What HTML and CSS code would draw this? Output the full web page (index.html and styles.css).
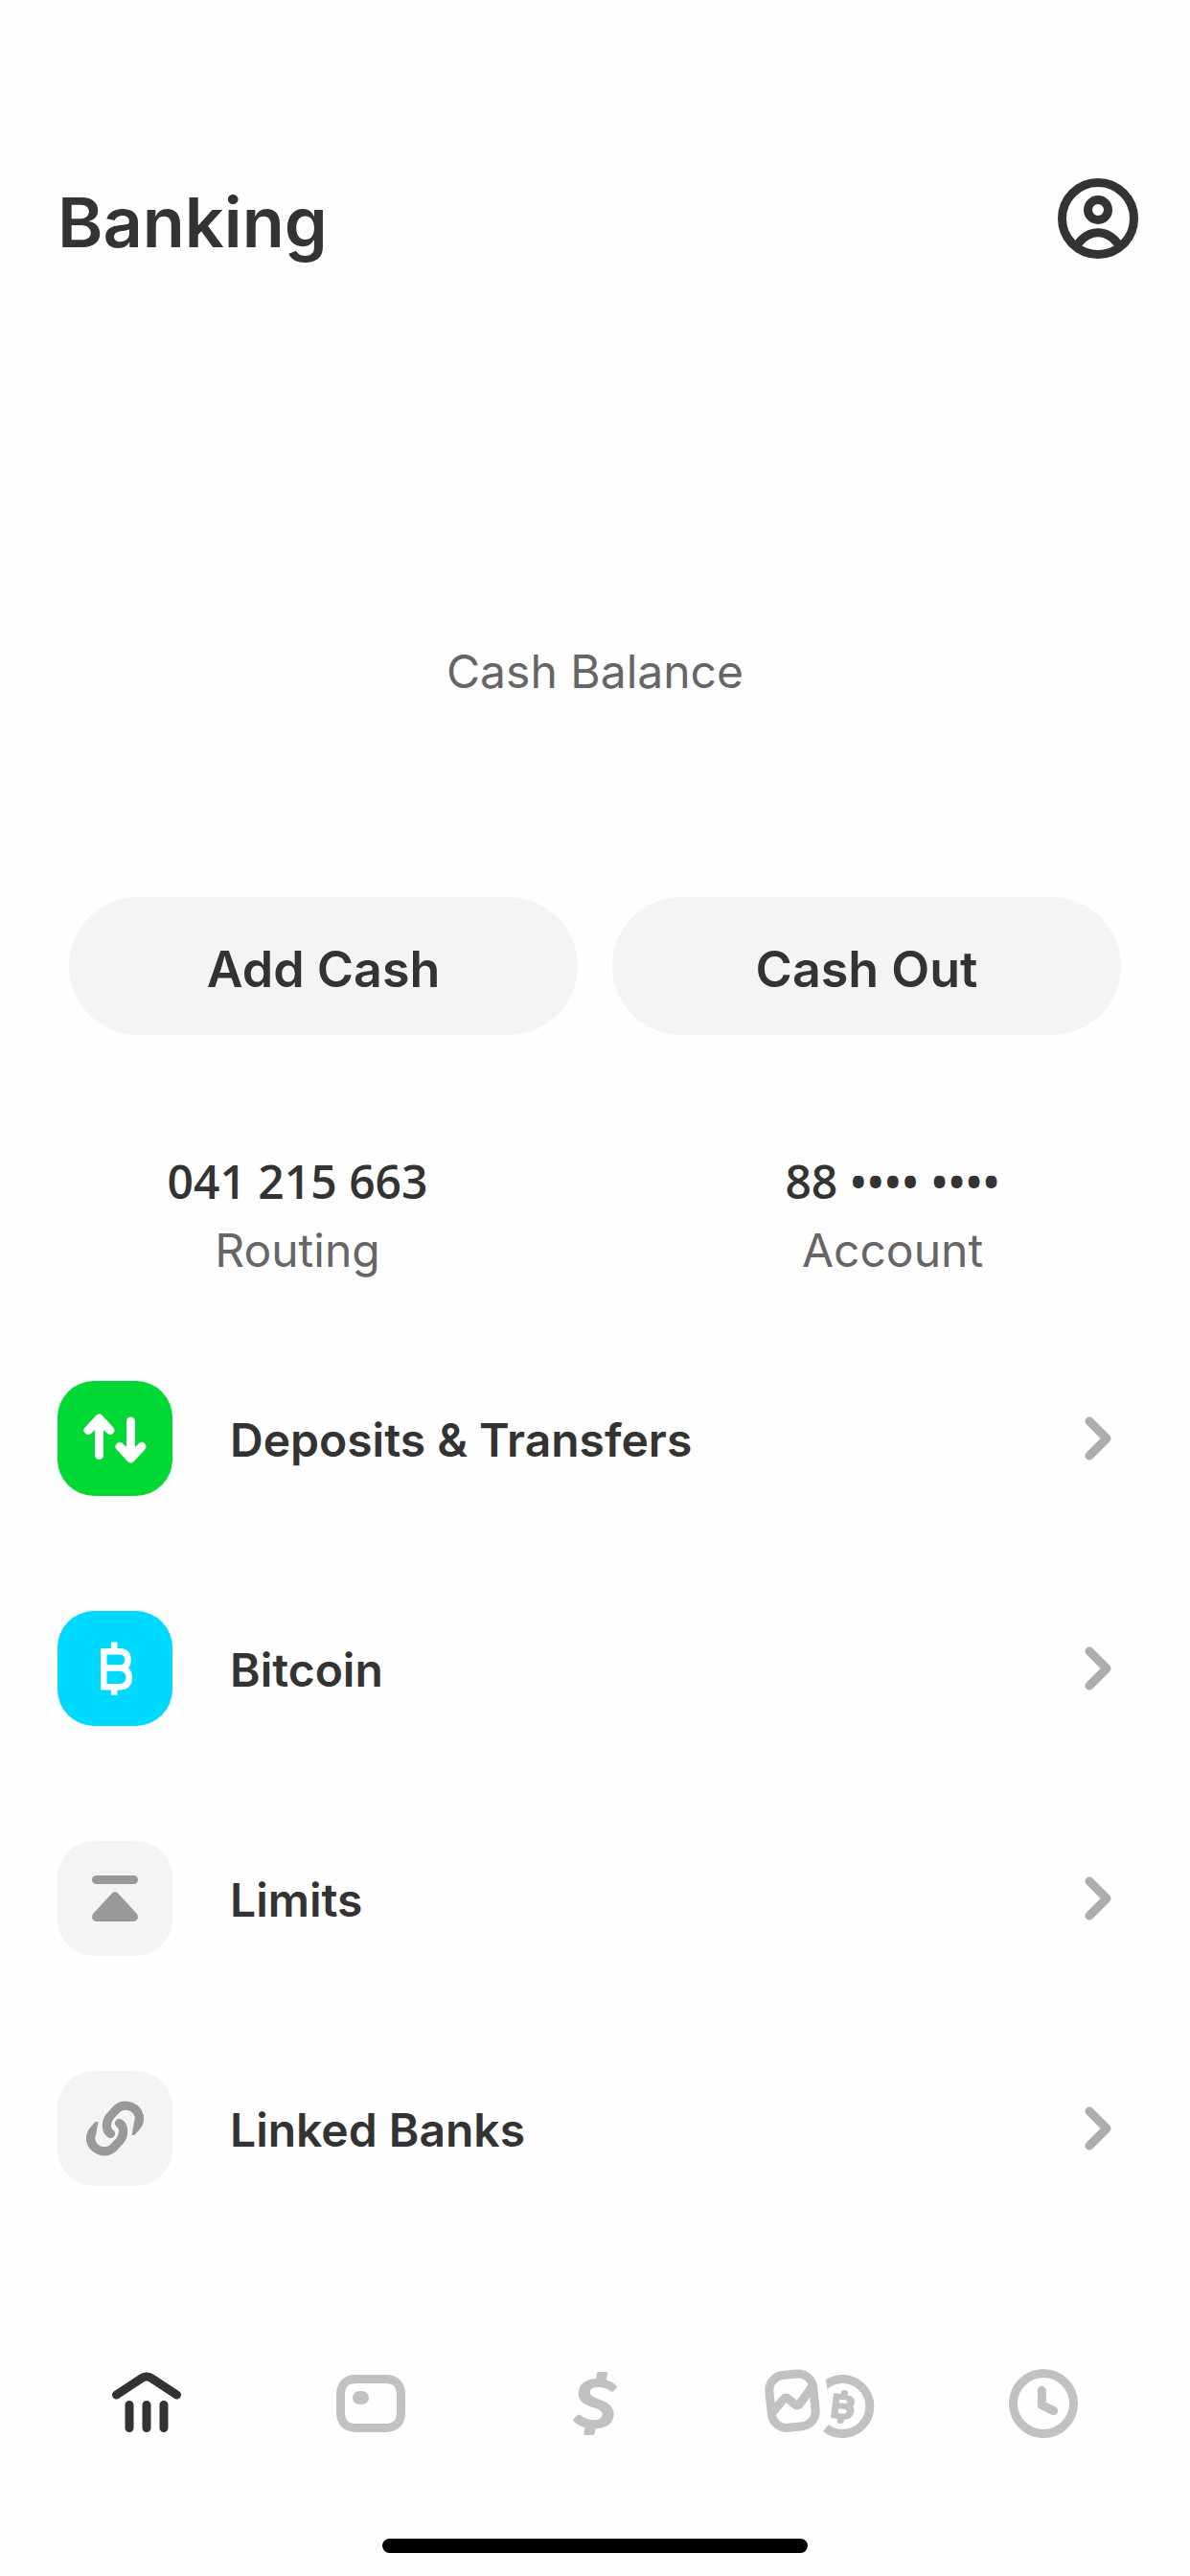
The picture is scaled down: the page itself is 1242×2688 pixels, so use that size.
FILE: index.html
```html
<!DOCTYPE html>
<html lang="en">
<head>
<meta charset="utf-8">
<meta name="viewport" content="width=device-width, initial-scale=1">
<title>Banking</title>
<link rel="stylesheet" href="styles.css">
</head>
<body>
<div class="app">
  <header class="header">
    <h1 class="title">Banking</h1>
    <button class="profile" type="button" aria-label="Profile">
      <svg width="84" height="84" viewBox="72 78 252 252" fill="none" stroke="currentColor" stroke-width="27">
        <circle cx="198" cy="204" r="112.500"/>
        <circle cx="198" cy="177" r="31.500"/>
        <path d="M133 287Q160 248.500 198 248.500Q236 248.500 263 287"/>
      </svg>
    </button>
  </header>

  <main class="main">
    <p class="balance">Cash Balance</p>

    <div class="actions">
      <button class="action" type="button">Add Cash</button>
      <button class="action" type="button">Cash Out</button>
    </div>

    <dl class="numbers">
      <div class="number">
        <dt class="number-label">Routing</dt>
        <dd class="number-value">041 215 663</dd>
      </div>
      <div class="number">
        <dt class="number-label">Account</dt>
        <dd class="number-value">88 •••• ••••</dd>
      </div>
    </dl>

    <ul class="menu">
      <li>
        <a class="row" href="#deposits">
          <svg class="tile tile-green" viewBox="0 0 120 120" fill="none" stroke="currentColor" stroke-width="9" stroke-linecap="round" stroke-linejoin="round">
            <path d="M43.500 40V77.500M32 51.500L43.500 39L55 51.500L43.500 41ZM76.500 42V80M65 68.500L76.500 81L88 68.500L76.500 79Z"/>
          </svg>
          <span class="row-label">Deposits &amp; Transfers</span>
          <svg class="chevron" viewBox="0 0 28 46"><path d="M5 5L23 23L5 41"/></svg>
        </a>
      </li>
      <li>
        <a class="row" href="#bitcoin">
          <svg class="tile tile-cyan" viewBox="0 0 120 120" fill="none" stroke="currentColor" stroke-width="6.500">
            <path d="M48.300 42.300H64.500Q73.500 42.300 73.500 51Q73.500 59.500 64.500 59.500H48.300M64.500 59.500Q74.700 60 74.700 69.500Q74.700 79.200 64.500 79.200H48.300M48.300 39V82.500M59.200 32.500V42M59.200 80V87.700"/>
          </svg>
          <span class="row-label">Bitcoin</span>
          <svg class="chevron" viewBox="0 0 28 46"><path d="M5 5L23 23L5 41"/></svg>
        </a>
      </li>
      <li>
        <a class="row" href="#limits">
          <svg class="tile tile-grey" viewBox="0 0 120 120" fill="currentColor">
            <rect x="36" y="36" width="48" height="9" rx="4.500"/>
            <path d="M57 54.500Q60 51.500 63 54.500L82.500 75.500Q84.500 78 83.800 80.500Q82.500 84 79 84H41Q37.500 84 36.200 80.500Q35.500 78 37.500 75.500Z"/>
          </svg>
          <span class="row-label">Limits</span>
          <svg class="chevron" viewBox="0 0 28 46"><path d="M5 5L23 23L5 41"/></svg>
        </a>
      </li>
      <li>
        <a class="row" href="#linked-banks">
          <svg class="tile tile-grey" viewBox="0 0 120 120" fill="none" stroke="currentColor" stroke-width="9.200" stroke-linecap="round">
            <defs>
              <clipPath id="link-end"><path d="M79.500 40L79.500 56L77.500 67L90 67V40Z"/></clipPath>
              <g id="link-half">
                <path d="M55.500 65.500C50.500 62.500 49.500 53 55.500 46.500L62 39.500A14.500 14.500 0 0 1 85.500 49"/>
                <path clip-path="url(#link-end)" d="M85.500 48A14.500 14.500 0 0 1 81 59.500L71 70"/>
              </g>
            </defs>
            <use href="#link-half"/>
            <use href="#link-half" transform="rotate(180 60 60)"/>
          </svg>
          <span class="row-label">Linked Banks</span>
          <svg class="chevron" viewBox="0 0 28 46"><path d="M5 5L23 23L5 41"/></svg>
        </a>
      </li>
    </ul>
  </main>

  <footer class="footer">
    <nav class="tabs" aria-label="Main">
      <a class="tab tab-active" href="#banking" aria-label="Banking" aria-current="page">
        <svg width="72" height="72" viewBox="0 0 72 72" fill="none" stroke="currentColor" stroke-width="9" stroke-linecap="round">
          <path d="M4.500 27L31 9.500Q36 6.500 41 9.500L67.500 27M18 37.500V61.500M36 37.500V61.500M54 37.500V61.500"/>
        </svg>
      </a>
      <a class="tab" href="#card" aria-label="Card">
        <svg width="72" height="72" viewBox="0 0 72 72" fill="none">
          <path d="M21 10.500H51Q67.500 10.500 67.500 27V45Q67.500 61.500 51 61.500H21Q4.500 61.500 4.500 45V27Q4.500 10.500 21 10.500Z" stroke="currentColor" stroke-width="9"/>
          <rect x="17" y="23" width="17" height="14" rx="7" fill="currentColor"/>
        </svg>
      </a>
      <a class="tab" href="#pay" aria-label="Pay">
        <svg width="48" height="66" viewBox="78 105 144 198" fill="currentColor">
          <path d="M153 126L156 109Q157 105 162 105H185Q190 105 189 110L185 130Q204 136 216 147Q221 151 217 155L208 165Q204 169 199 166Q184 153 160 153Q134 153 134 169Q134 181 158 189Q209 206 209 236Q209 278 152 283L149 298Q148 303 143 303H119Q114 303 115 298L119 279Q98 274 84 261Q79 257 83 253L95 241Q99 237 104 240Q122 255 145 256Q173 256 173 238Q173 226 146 217Q98 203 98 173Q98 131 153 126Z"/>
        </svg>
      </a>
      <a class="tab" href="#invest" aria-label="Investing">
        <svg width="116" height="74" viewBox="681 93 348 222" fill="none" stroke="currentColor" stroke-width="27">
          <defs><clipPath id="coin-edge"><path d="M872 100L880 160L895 213L885 269L864 295L870 330H1040V100Z"/></clipPath></defs>
          <rect x="702" y="113" width="138" height="165" rx="47" transform="rotate(-6 771 195.500)"/>
          <path d="M708 233L742 192Q750 183 759 190L778 206Q787 215 795 204L832 153"/>
          <circle cx="928" cy="213" r="85.500" clip-path="url(#coin-edge)"/>
          <path fill="currentColor" stroke="none" fill-rule="evenodd" d="M900 175Q901 171 906 172L923 174L924 167Q926 161 934 162Q945 163 945 169L944 178Q966 183 966 199Q966 208 961 214Q966 222 964 231Q960 252 933 255L932 262Q930 268 920 267Q910 266 911 260L912 252L895 250Q890 249 891 245ZM919 191L936 193Q943 195 943 199Q942 205 935 204L917 202ZM916 220L934 222Q942 224 941 230Q940 236 932 236L914 234Z"/>
        </svg>
      </a>
      <a class="tab" href="#activity" aria-label="Activity">
        <svg width="72" height="72" viewBox="99 96 216 216" fill="none" stroke="currentColor" stroke-width="27" stroke-linecap="round" stroke-linejoin="round">
          <circle cx="207" cy="204" r="94.500"/>
          <path d="M202 163V209L239 227"/>
        </svg>
      </a>
    </nav>
    <div class="home-indicator"></div>
  </footer>
</div>
</body>
</html>
```
FILE: styles.css
```css
* {
  box-sizing: border-box;
}

body {
  margin: 0;
  background: #fefefe;
  color: #333;
  font-family: Inter, "Liberation Sans", sans-serif;
  font-size: 48px;
  line-height: 72px;
}

button {
  border: 0;
  padding: 0;
  color: inherit;
  font: inherit;
  cursor: pointer;
}

a {
  color: inherit;
  text-decoration: none;
}

svg {
  display: block;
  flex: none;
}

.app {
  display: flex;
  flex-direction: column;
  min-height: 100vh;
}

.header {
  display: flex;
  align-items: center;
  justify-content: space-between;
  padding: 176px 54px 0 60px;
}

.title {
  margin: 0;
  padding-top: 8px;
  font-size: 72px;
  font-weight: 600;
  line-height: 96px;
}

.profile {
  background: none;
}

.main {
  flex: 1;
}

.balance {
  margin: 0;
  padding-top: 385px;
  color: #666;
  text-align: center;
}

.actions {
  display: grid;
  grid-template-columns: 1fr 1fr;
  gap: 36px;
  padding: 199px 72px 0;
}

.action {
  height: 144px;
  padding-top: 8px;
  border-radius: 72px;
  background: #f4f4f4;
  font-size: 52px;
  font-weight: 600;
}

.numbers {
  display: grid;
  grid-template-columns: 1fr 1fr;
  margin: 0;
  padding-top: 117px;
  text-align: center;
}

.number {
  display: flex;
  flex-direction: column-reverse;
}

.number-label {
  color: #666;
}

.number-value {
  margin: 0;
  font-family: "Open Sans", "Noto Sans", sans-serif;
  font-weight: 600;
}

.menu {
  display: flex;
  flex-direction: column;
  gap: 120px;
  margin: 0;
  padding: 100px 82px 0 60px;
  list-style: none;
}

.row {
  display: flex;
  align-items: center;
  gap: 60px;
}

.row-label {
  flex: 1;
  padding-top: 4px;
  font-weight: 600;
}

.tile {
  width: 120px;
  height: 120px;
  border-radius: 38px;
}

.tile-green {
  background: #00d933;
  color: #fff;
}

.tile-cyan {
  background: #00d9ff;
  color: #fff;
}

.tile-grey {
  background: #f4f4f4;
  color: #999;
}

.chevron {
  width: 28px;
  height: 46px;
  fill: none;
  stroke: #adadad;
  stroke-width: 9;
  stroke-linecap: round;
  stroke-linejoin: round;
}

.tabs {
  display: grid;
  grid-template-columns: repeat(5, 1fr);
  padding: 0 36px;
}

.tab {
  display: flex;
  align-items: center;
  justify-content: center;
  height: 144px;
  color: #c1c1c1;
}

.tab-active {
  color: #333;
}

.home-indicator {
  width: 444px;
  height: 15px;
  margin: 69px auto 24px;
  border-radius: 8px;
  background: #000;
}
```
